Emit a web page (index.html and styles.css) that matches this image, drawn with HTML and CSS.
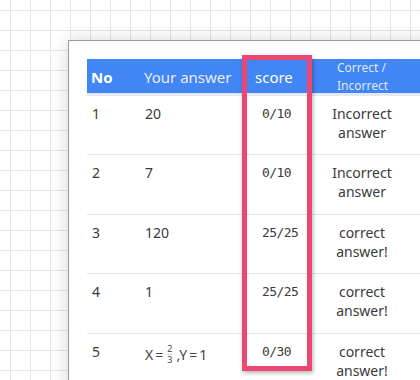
FILE: index.html
```html
<!DOCTYPE html>
<html>
<head>
<meta charset="utf-8">
<link rel="stylesheet" href="styles.css">
</head>
<body>
<div class="card">
  <div class="table">
    <div class="row head">
      <div class="cell no">No</div>
      <div class="cell">Your answer</div>
      <div class="cell score-h">score</div>
      <div class="cell judge-h">Correct /<br>Incorrect</div>
      <div class="cell"></div>
    </div>
    <div class="row">
      <div class="cell">1</div>
      <div class="cell">20</div>
      <div class="cell score">0/10</div>
      <div class="cell judge">Incorrect<br>answer</div>
      <div class="cell"></div>
    </div>
    <div class="row">
      <div class="cell">2</div>
      <div class="cell">7</div>
      <div class="cell score">0/10</div>
      <div class="cell judge">Incorrect<br>answer</div>
      <div class="cell"></div>
    </div>
    <div class="row">
      <div class="cell">3</div>
      <div class="cell">120</div>
      <div class="cell score">25/25</div>
      <div class="cell judge">correct<br>answer!</div>
      <div class="cell"></div>
    </div>
    <div class="row">
      <div class="cell">4</div>
      <div class="cell">1</div>
      <div class="cell score">25/25</div>
      <div class="cell judge">correct<br>answer!</div>
      <div class="cell"></div>
    </div>
    <div class="row">
      <div class="cell">5</div>
      <div class="cell"><span class="math">X<span class="op">=</span><span class="frac"><span>2</span><span class="den">3</span></span>,Y<span class="op">=</span>1</span></div>
      <div class="cell score">0/30</div>
      <div class="cell judge">correct<br>answer!</div>
      <div class="cell"></div>
    </div>
  </div>
  <div class="highlight"></div>
</div>
</body>
</html>
```
FILE: styles.css
```css
html, body {
  margin: 0;
  padding: 0;
}
body {
  width: 420px;
  height: 380px;
  overflow: hidden;
  background-color: #fff;
  background-image:
    linear-gradient(#e6e6e6 1px, transparent 1px),
    linear-gradient(90deg, #e6e6e6 1px, transparent 1px);
  background-size: 20px 20px;
  background-position: 10px 10px;
  font-family: "Noto Sans", "DejaVu Sans", sans-serif;
  color: #3a3a3a;
}
.card {
  position: relative;
  margin: 40px 0 0 68px;
  width: 440px;
  height: 400px;
  padding: 18px;
  background: #fff;
  border: 1px solid #999;
  box-shadow: 0 0 18px rgba(0, 0, 0, 0.16);
}
.table {
  display: flex;
  flex-direction: column;
}
.row {
  display: grid;
  grid-template-columns: 53px 110px 63px 98px 1fr;
  height: 59.4px;
  box-sizing: border-box;
  border-bottom: 1px solid #e6e6e6;
  font-size: 14px;
  line-height: 19px;
}
.row .cell {
  padding: 8px 5px 0 5px;
}
.row.head {
  height: 37px;
  background: #4285f4;
  border-bottom: 3px solid #e6e9ee;
  color: rgba(255, 255, 255, 0.9);
  font-size: 15px;
  align-items: center;
}
.row.head .cell {
  padding: 0 4px;
}
.row.head .no {
  font-weight: bold;
  color: #fff;
}
.row.head .score-h {
  padding-left: 5px;
  color: #fff;
}
.row.head .judge-h {
  padding-left: 24px;
  font-size: 12px;
  line-height: 18px;
  color: rgba(255, 255, 255, 0.85);
}
.score {
  font-family: "DejaVu Sans Mono", monospace;
  font-size: 13px;
  letter-spacing: -0.6px;
  color: #3a3a3a;
}
.row .cell.score {
  padding-left: 12px;
}
.judge {
  text-align: center;
}
.math {
  display: inline-flex;
  align-items: center;
  font-size: 14px;
  color: #444;
  margin-top: 2px;
}
.op {
  margin: 0 2px;
}
.frac {
  display: inline-flex;
  flex-direction: column;
  align-items: center;
  font-size: 9px;
  line-height: 10px;
  margin: 0 4px 0 2px;
}
.frac .den {
  border-top: 1px solid #ccc;
}
.highlight {
  position: absolute;
  left: 173px;
  top: 14px;
  width: 70px;
  height: 316px;
  box-sizing: border-box;
  border: 5px solid #ec4672;
  box-shadow: 1px 2px 4px rgba(0, 0, 0, 0.3);
}
```
